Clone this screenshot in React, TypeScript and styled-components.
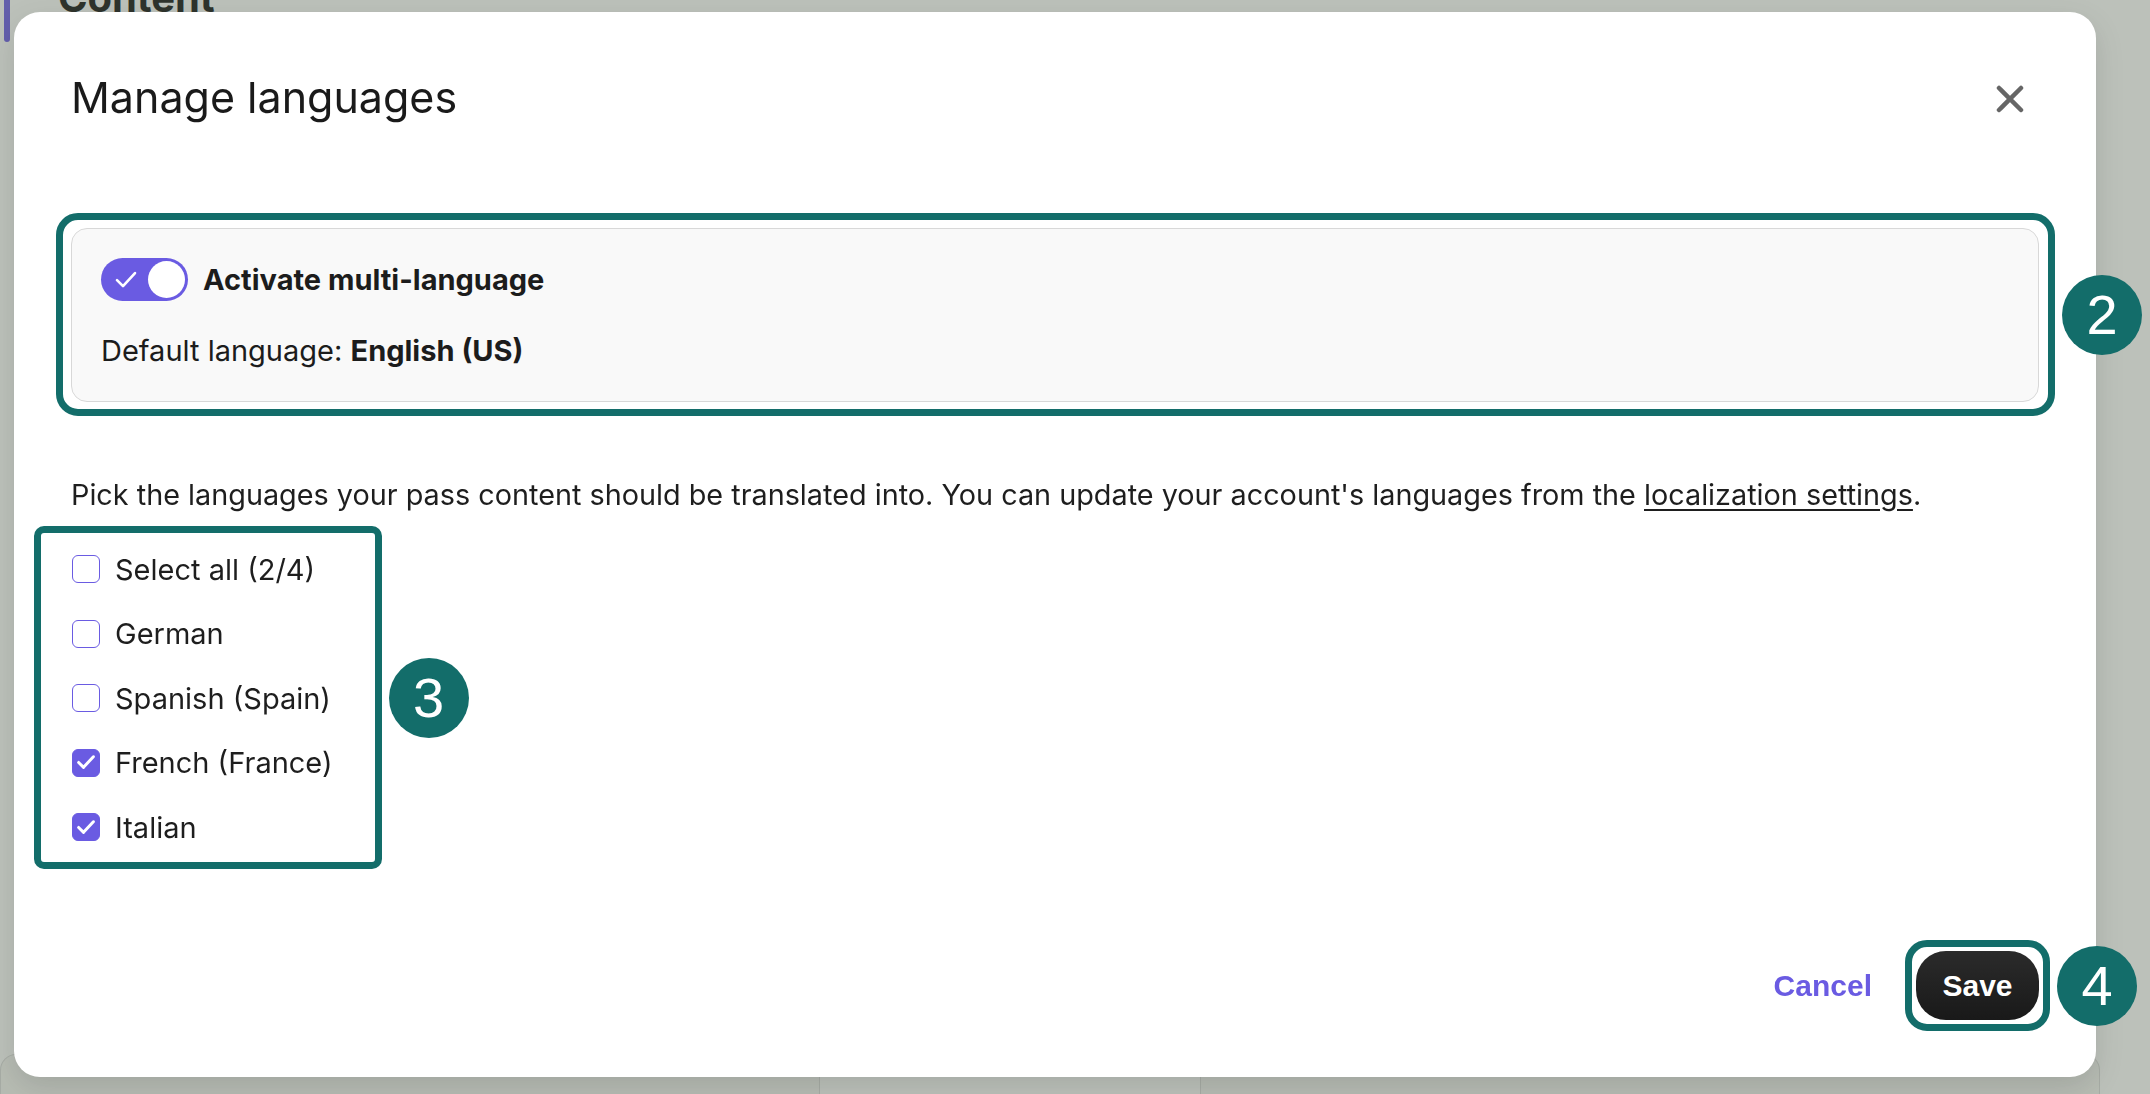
import React from 'react';
import styled, { createGlobalStyle } from 'styled-components';

const teal = '#136d6a';
const purple = '#6a5be2';
const ink = '#1c1c1c';

const GlobalStyle = createGlobalStyle`
    html, body {
        margin: 0;
        padding: 0;
        background: #ffffff;
        font-family: Inter, "Noto Sans", sans-serif;
        color: ${ink};
        overflow: hidden;
    }
    * {
        box-sizing: border-box;
    }
`;

// page sitting behind the dialog
const Page = styled.div`
    display: flex;
    height: 100vh;
    background: #ffffff;
`;

const SideTab = styled.div`
    width: 6px;
    height: 42px;
    margin-left: 4px;
    border-radius: 0 0 4px 4px;
    background: #6b5ce7;
`;

const PageBody = styled.div`
    flex: 1;
    display: flex;
    flex-direction: column;
    padding-left: 48px;
`;

const PageTitle = styled.h1`
    margin: -26px 0 0;
    font-size: 40px;
    line-height: 48px;
    font-weight: 700;
    color: #141414;
`;

const CardRow = styled.div`
    margin-top: auto;
    display: flex;
    gap: 380px;
    margin-left: -58px;
`;

const PageCard = styled.div<{ $width: number }>`
    width: ${({ $width }) => $width}px;
    height: 40px;
    border: 1px solid #dcdcdc;
    border-bottom: none;
    border-radius: 16px 16px 0 0;
    background: #f6f6f4;
`;

const Overlay = styled.div`
    position: fixed;
    inset: 0;
    display: flex;
    padding: 12px 54px 17px 14px;
    background: rgba(88, 100, 82, 0.4);
`;

const Modal = styled.div`
    flex: 1;
    display: flex;
    flex-direction: column;
    padding: 57px;
    border-radius: 26px;
    background: #ffffff;
    box-shadow: 0 10px 30px rgba(0, 0, 0, 0.12);
`;

const Header = styled.div`
    display: flex;
    align-items: center;
    justify-content: space-between;
    height: 56px;
`;

const Title = styled.h2`
    margin: 0;
    font-size: 43px;
    line-height: 56px;
    font-weight: 400;
    color: #1a1a1a;
`;

const CloseButton = styled.button`
    display: flex;
    padding: 0;
    margin: 4px 15px 0 0;
    border: none;
    background: none;
    cursor: pointer;
`;

// teal annotation frame drawn around a piece of the dialog
const Highlight = styled.div<{ $pad: string; $pull: string; $radius: number; $inline?: boolean }>`
    position: relative;
    display: ${({ $inline }) => ($inline ? 'inline-flex' : 'flex')};
    flex-direction: column;
    align-self: ${({ $inline }) => ($inline ? 'flex-start' : 'stretch')};
    padding: ${({ $pad }) => $pad};
    margin: ${({ $pull }) => $pull};
    border: 7px solid ${teal};
    border-radius: ${({ $radius }) => $radius}px;
`;

// numbered marker next to a frame (7px border + 7px gap)
const Badge = styled.span`
    position: absolute;
    top: 50%;
    left: calc(100% + 14px);
    transform: translateY(-50%);
    display: flex;
    align-items: center;
    justify-content: center;
    width: 80px;
    height: 80px;
    border-radius: 50%;
    background: ${teal};
    color: #ffffff;
    font-family: "Liberation Sans", Arial, sans-serif;
    font-size: 56px;
    line-height: 1;
`;

const SettingsCard = styled.div`
    display: flex;
    flex-direction: column;
    gap: 32px;
    padding: 29px 29px 32px;
    border: 1px solid #d8d8d8;
    border-radius: 16px;
    background: #f9f9f9;
`;

const ToggleRow = styled.label`
    display: flex;
    align-items: center;
    gap: 15px;
    font-size: 29px;
    font-weight: 700;
    line-height: 43px;
`;

const Switch = styled.span<{ $on: boolean }>`
    position: relative;
    display: flex;
    align-items: center;
    width: 87px;
    height: 43px;
    padding-left: 14px;
    border-radius: 22px;
    background: ${({ $on }) => ($on ? purple : '#cfcfcf')};

    &::after {
        content: '';
        position: absolute;
        top: 3px;
        ${({ $on }) => ($on ? 'right: 3px;' : 'left: 3px;')}
        width: 37px;
        height: 37px;
        border-radius: 50%;
        background: #ffffff;
    }
`;

const Line = styled.p`
    margin: 0;
    font-size: 29px;
    line-height: 36px;

    strong {
        font-weight: 700;
    }
`;

const Description = styled(Line)`
    margin-top: 76px;
    font-size: 28.8px;
    color: #1e1e1e;

    a {
        color: inherit;
        text-decoration: underline;
        text-underline-offset: 4px;
    }
`;

const LanguageList = styled.div`
    display: flex;
    flex-direction: column;
    gap: 20.5px;
`;

const Option = styled.label`
    display: flex;
    align-items: center;
    gap: 15px;
    height: 44px;
    padding-left: 1px;
    font-size: 29px;
    color: #1e1e1e;
    white-space: nowrap;
`;

const Box = styled.span<{ $checked: boolean }>`
    display: flex;
    align-items: center;
    justify-content: center;
    width: 28px;
    height: 28px;
    border: 1.5px solid ${purple};
    border-radius: 6px;
    background: ${({ $checked }) => ($checked ? purple : '#ffffff')};
`;

const Footer = styled.div`
    display: flex;
    align-items: center;
    justify-content: flex-end;
    gap: 44px;
    margin-top: auto;
`;

const CancelButton = styled.button`
    padding: 0;
    border: none;
    background: none;
    color: ${purple};
    font-family: "Liberation Sans", Arial, sans-serif;
    font-size: 30px;
    font-weight: 700;
    cursor: pointer;
`;

const SaveButton = styled.button`
    width: 123px;
    height: 69px;
    border: none;
    border-radius: 30px;
    background: linear-gradient(#2b2b2b, #191919);
    color: #ffffff;
    font-family: "Liberation Sans", Arial, sans-serif;
    font-size: 30px;
    font-weight: 700;
    cursor: pointer;
`;

const CheckMark: React.FC<{ size: number; weight?: number }> = ({ size, weight = 2.6 }) => (
    <svg width={size} height={size * 0.78} viewBox="0 0 22 17" fill="none">
        <polyline points="2,9 8,15 20,2" stroke="#ffffff" strokeWidth={weight} strokeLinecap="round" strokeLinejoin="round" />
    </svg>
);

const languages = [
    { name: 'Select all (2/4)', checked: false },
    { name: 'German', checked: false },
    { name: 'Spanish (Spain)', checked: false },
    { name: 'French (France)', checked: true },
    { name: 'Italian', checked: true },
];

export default function App() {
    return (
        <>
            <GlobalStyle />
            <Page>
                <SideTab />
                <PageBody>
                    <PageTitle>Content</PageTitle>
                    <CardRow>
                        <PageCard $width={820} />
                        <PageCard $width={900} />
                    </CardRow>
                </PageBody>
            </Page>

            <Overlay>
                <Modal>
                    <Header>
                        <Title>Manage languages</Title>
                        <CloseButton aria-label="Close">
                            <svg width="28" height="28" viewBox="0 0 28 28">
                                <path d="M3 3 L25 25 M25 3 L3 25" stroke="#666666" strokeWidth="4.5" strokeLinecap="round" />
                            </svg>
                        </CloseButton>
                    </Header>

                    <Highlight $pad="8px 9px 7px 8px" $pull="88px -16px -15px -15px" $radius={22}>
                        <SettingsCard>
                            <ToggleRow>
                                <Switch $on>
                                    <CheckMark size={22} />
                                </Switch>
                                Activate multi-language
                            </ToggleRow>
                            <Line>
                                Default language: <strong>English (US)</strong>
                            </Line>
                        </SettingsCard>
                        <Badge>2</Badge>
                    </Highlight>

                    <Description>
                        Pick the languages your pass content should be translated into. You can update your account's
                        languages from the <a href="#">localization settings</a>.
                    </Description>

                    <Highlight $inline $pad="14px 42px 13px 30px" $pull="13px 0 -20px -37px" $radius={10}>
                        <LanguageList>
                            {languages.map((lang) => (
                                <Option key={lang.name}>
                                    <Box $checked={lang.checked}>
                                        {lang.checked && <CheckMark size={18} weight={3.6} />}
                                    </Box>
                                    {lang.name}
                                </Option>
                            ))}
                        </LanguageList>
                        <Badge>3</Badge>
                    </Highlight>

                    <Footer>
                        <CancelButton>Cancel</CancelButton>
                        <Highlight $inline $pad="4px" $pull="-11px" $radius={22}>
                            <SaveButton>Save</SaveButton>
                            <Badge>4</Badge>
                        </Highlight>
                    </Footer>
                </Modal>
            </Overlay>
        </>
    );
}
